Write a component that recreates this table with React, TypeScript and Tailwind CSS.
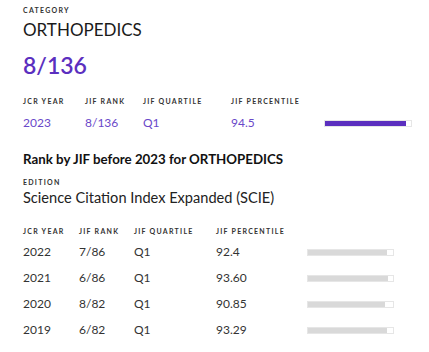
const history = [
  { year: '2022', rank: '7/86', quartile: 'Q1', percentile: '92.4', value: 92.4 },
  { year: '2021', rank: '6/86', quartile: 'Q1', percentile: '93.60', value: 93.6 },
  { year: '2020', rank: '8/82', quartile: 'Q1', percentile: '90.85', value: 90.85 },
  { year: '2019', rank: '6/82', quartile: 'Q1', percentile: '93.29', value: 93.29 },
];

function Label({ children }: { children: React.ReactNode }) {
  return (
    <div className="text-[7px] font-bold uppercase leading-none tracking-[0.18em] text-[#333]">{children}</div>
  );
}

function Bar({ value, dark }: { value: number; dark?: boolean }) {
  return (
    <div className="h-[7px] w-full border border-[#e6e6e6] bg-white">
      <div
        className={dark ? 'h-full bg-[#5b2fbf]' : 'h-full bg-[#d9d9d9]'}
        style={{ width: `${value}%` }}
      />
    </div>
  );
}

export default function App() {
  return (
    <div
      className="flex h-[352px] w-[429px] flex-col bg-white pl-[23px] text-[#222]"
      style={{ fontFamily: 'Lato, "Open Sans", sans-serif' }}
    >
      <div className="flex h-[20px] items-center">
        <Label>Category</Label>
      </div>
      <div className="flex h-[20px] items-center text-[17px] text-[#1a1a1a]">ORTHOPEDICS</div>
      <div className="mt-[10px] flex h-[30px] items-center text-[23px] font-semibold text-[#5b2fbf]">8/136</div>

      <div className="mt-[13px] grid h-[16px] grid-cols-[62px_58px_88px_93px_88px] items-center">
        <Label>JCR Year</Label>
        <Label>JIF Rank</Label>
        <Label>JIF Quartile</Label>
        <Label>JIF Percentile</Label>
        <div />
      </div>
      <div className="mt-[5px] grid h-[16px] grid-cols-[62px_58px_88px_93px_88px] items-center text-[12px] text-[#6a48c9]">
        <div>2023</div>
        <div>8/136</div>
        <div>Q1</div>
        <div>94.5</div>
        <Bar value={94.5} dark />
      </div>

      <div className="mt-[22px] flex h-[16px] items-center text-[13.3px] font-bold text-[#111]">
        Rank by JIF before 2023 for ORTHOPEDICS
      </div>
      <div className="mt-[8px] flex h-[12px] items-center">
        <Label>Edition</Label>
      </div>
      <div className="mt-[1px] flex h-[18px] items-center text-[14.6px] text-[#222]">
        Science Citation Index Expanded (SCIE)
      </div>

      <div className="mt-[17px] grid h-[14px] grid-cols-[56px_55px_82px_91px_87px] items-center">
        <Label>JCR Year</Label>
        <Label>JIF Rank</Label>
        <Label>JIF Quartile</Label>
        <Label>JIF Percentile</Label>
        <div />
      </div>
      <div className="mt-[1px] flex flex-col">
        {history.map((row) => (
          <div
            key={row.year}
            className="grid h-[26px] grid-cols-[56px_55px_82px_91px_87px] items-center text-[12px] text-[#333]"
          >
            <div>{row.year}</div>
            <div>{row.rank}</div>
            <div>{row.quartile}</div>
            <div>{row.percentile}</div>
            <Bar value={row.value} />
          </div>
        ))}
      </div>
    </div>
  );
}
